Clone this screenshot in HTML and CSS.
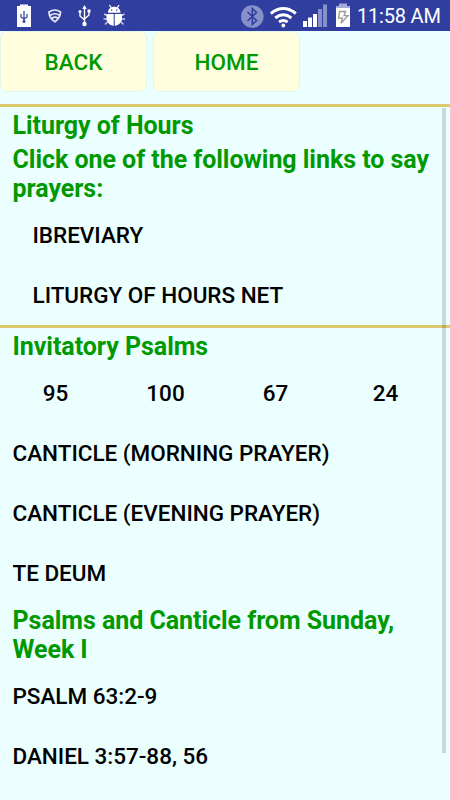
FILE: index.html
```
<!DOCTYPE html>
<html lang="en">
<head>
    <meta charset="UTF-8">
    <meta name="viewport" content="width=device-width, initial-scale=1.0">
    <title>Liturgy of Hours</title>
    <link rel="stylesheet" href="styles.css">
</head>
<body>
    <header class="status-bar">
        <svg class="status-icons" width="130" height="31" viewBox="0 0 130 31">
            <!-- USB battery -->
            <path fill="#fff" d="M17 6h3V4.500h8V6h3v21H17z"/>
            <g fill="none" stroke="#303f9f" stroke-width="1.200">
                <path d="M24 11v11M21 14v3l3 2 3-2v-3"/>
            </g>
            <circle cx="24" cy="21.500" r="1.400" fill="#303f9f"/>
            <!-- Signal shield -->
            <g fill="none" stroke="#e8eaf6" stroke-width="1.700" stroke-linecap="round">
                <path d="M49 12q6-4 11.500 0c0 4-2 7-5.500 9.800C51 19.500 49 16 49 12z"/>
                <path d="M50.500 15.200q4.500-3 9 .2M52.300 18q3-1.800 5.400.2"/>
            </g>
            <!-- USB -->
            <g fill="none" stroke="#fff" stroke-width="1.400">
                <path d="M84.500 7v17M80 12v4l4.500 4M89 11v4l-4.500 4"/>
            </g>
            <path fill="#fff" d="M82.300 9l2.200-4 2.200 4zM87.500 9.500h3v3h-3z"/>
            <circle cx="80" cy="11.500" r="1.600" fill="#fff"/>
            <circle cx="84.500" cy="24" r="2.200" fill="#fff"/>
            <!-- Debug bug -->
            <path fill="none" stroke="#fff" stroke-width="1.300" d="M109.500 5l1.800 3M119 5l-1.800 3"/>
            <path fill="none" stroke="#c5cae9" stroke-width="1.500" d="M107 15.500l-3-1.500M121.500 15.500l3-1.500M107 19h-3.500M121.500 19h3.500M107.500 22l-2.500 2.500M121 22l2.500 2.500"/>
            <path fill="#fff" d="M108 12.800c0-8 12.500-8 12.500 0zM106.500 14h7.200v11.700c-4.300-.5-7.200-3.400-7.200-7.200zM114.700 14h7.300v4.500c0 3.800-2.900 6.700-7.300 7.200z"/>
            <path fill="#303f9f" d="M111 9.500h1.300v1.300H111zM116 9.500h1.300v1.300H116z"/>
        </svg>
        <svg class="status-icons" width="115" height="31" viewBox="0 0 115 31">
            <!-- Bluetooth -->
            <circle cx="12.300" cy="16.500" r="11.300" fill="#8791c9"/>
            <path fill="none" stroke="#303f9f" stroke-width="1.600" d="M7.500 12l9 8.500-4.200 4V8.500l4.200 4-9 8.500"/>
            <!-- Wifi -->
            <g fill="none" stroke="#fff" stroke-width="2.900">
                <path d="M30.800 13.500q12.500-10 25 0M35.200 18q8.100-6.300 16.200 0M39 22q4.300-3.200 8.600 0"/>
            </g>
            <circle cx="43.300" cy="25.500" r="1.900" fill="#fff"/>
            <!-- Mobile signal -->
            <path fill="#fff" d="M63 21h4v6h-4zM68 17.500h4V27h-4zM73 14h4v13h-4z"/>
            <path fill="#8791c9" d="M78 9h4v18h-4zM83 4.500h4V27h-4z"/>
            <!-- Charging battery -->
            <path fill="#a4acd7" d="M96 6h3V3.500h8V6h3v3H96z"/>
            <path fill="#fff" d="M96 8h14v19H96z"/>
            <path fill="#fff" stroke="#999" stroke-width="1.300" d="M99.500 11.500h6l-1.500 4.200h4l-7 7.500 1.500-5h-4z"/>
        </svg>
        <span class="clock">11:58 AM</span>
    </header>

    <nav class="toolbar">
        <button class="nav-button">BACK</button>
        <button class="nav-button">HOME</button>
    </nav>

    <main class="content">
        <section class="links">
            <h1 class="heading title">Liturgy of Hours</h1>
            <h2 class="heading">Click one of the following links to say prayers:</h2>
            <a class="item indented">IBREVIARY</a>
            <a class="item indented">LITURGY OF HOURS NET</a>
        </section>

        <section class="psalms">
            <h2 class="heading">Invitatory Psalms</h2>
            <div class="numbers">
                <a class="item">95</a>
                <a class="item">100</a>
                <a class="item">67</a>
                <a class="item">24</a>
            </div>
            <a class="item">CANTICLE (MORNING PRAYER)</a>
            <a class="item">CANTICLE (EVENING PRAYER)</a>
            <a class="item">TE DEUM</a>
            <h2 class="heading week">Psalms and Canticle from Sunday, Week I</h2>
            <a class="item">PSALM 63:2-9</a>
            <a class="item">DANIEL 3:57-88, 56</a>
        </section>
        <div class="scrollbar"></div>
    </main>
</body>
</html>
```

FILE: styles.css
```
* {
    margin: 0;
    padding: 0;
    box-sizing: border-box;
}

body {
    height: 100vh;
    overflow: hidden;
    background: #ebffff;
    font-family: Roboto, sans-serif;
    color: #000;
}

.status-bar {
    display: flex;
    height: 31px;
    background: #303f9f;
    color: #fff;
}

.status-icons + .status-icons {
    margin-left: 110px;
}

.status-icons {
    flex: none;
}

.clock {
    margin-left: 2px;
    font-size: 20px;
    letter-spacing: -0.2px;
    line-height: 33px;
    white-space: nowrap;
}

/* Top buttons */
.toolbar {
    display: flex;
    gap: 6px;
    height: 73px;
}

.nav-button {
    width: 147px;
    height: 61px;
    border: 1px solid #e2f6ee;
    border-radius: 7px;
    background: #ffffdf;
    color: #009900;
    font-family: inherit;
    font-size: 22.5px;
    font-weight: 500;
}

/* Scrolling list */
.content {
    position: relative;
    height: 696px;
}

.links,
.psalms {
    padding: 4px 12.5px 0;
    border-top: 3px solid #dcc96e;
}

.links {
    height: 221px;
}

.heading {
    color: #009900;
    font-size: 25px;
    font-weight: 700;
    letter-spacing: -0.04px;
    line-height: 29px;
}

.title {
    margin-bottom: 5px;
}

.links .heading + .item {
    margin-top: 2px;
}

.week {
    margin: 3px 0 2px;
}

.item {
    display: block;
    height: 60px;
    font-size: 22.5px;
    font-weight: 500;
    letter-spacing: -0.02px;
    line-height: 60px;
    white-space: nowrap;
}

.indented {
    padding-left: 20px;
}

.numbers {
    display: grid;
    grid-template-columns: repeat(4, 110px);
    margin: 2px 0 0 -12px;
    text-align: center;
}

.scrollbar {
    position: absolute;
    top: 4px;
    right: 4px;
    width: 4px;
    height: 645px;
    background: rgba(0, 0, 0, 0.15);
}
```
